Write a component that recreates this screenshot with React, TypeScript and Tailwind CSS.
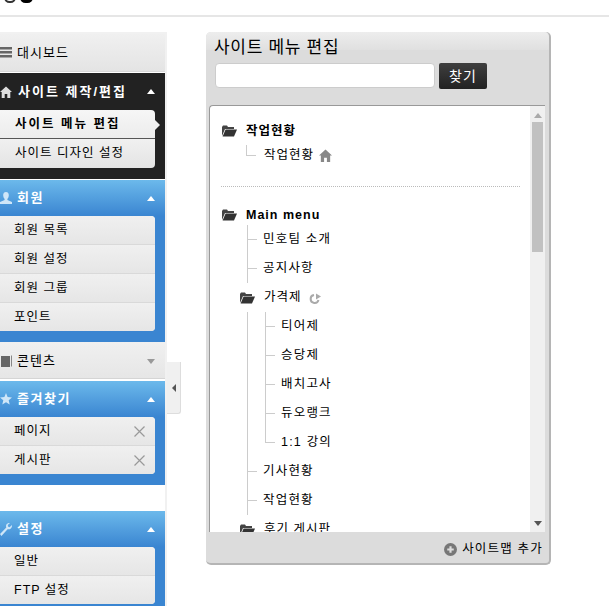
import React from 'react'

const font = "font-['Liberation_Sans','Noto_Sans_CJK_KR',sans-serif]"

function FolderIcon() {
  return (
    <svg width="15" height="12" viewBox="0 0 15 12" className="shrink-0">
      <path d="M0 2 L1 0.5 H5 L6 2 H12 V4 H3 L0 11 Z" fill="#444" />
      <path d="M3.6 4.6 H15 L12 11.5 H0.6 Z" fill="#333" />
    </svg>
  )
}

function HomeIcon({ color, size = 12 }: { color: string; size?: number }) {
  return (
    <svg width={size} height={size} viewBox="0 0 12 12" className="shrink-0">
      <path d="M6 0.5 L12 6 H10.3 V12 H7.3 V8 H4.7 V12 H1.7 V6 H0 Z" fill={color} />
    </svg>
  )
}

function Caret({ up = true, color = '#fff' }: { up?: boolean; color?: string }) {
  return (
    <svg width="8" height="5" viewBox="0 0 8 5" className="shrink-0">
      <path d={up ? 'M4 0 L8 5 H0 Z' : 'M0 0 H8 L4 5 Z'} fill={color} />
    </svg>
  )
}

function CloseX() {
  return (
    <svg width="11" height="11" viewBox="0 0 11 11" className="shrink-0">
      <path d="M0.5 0.5 L10.5 10.5 M10.5 0.5 L0.5 10.5" stroke="#999" strokeWidth="1.2" />
    </svg>
  )
}

interface HeaderProps {
  icon: React.ReactNode
  label: string
  h: string
  tone: string
  labelClass?: string
}

function SectionHeader({ icon, label, h, tone, labelClass = 'ml-[-1px] tracking-[1.5px]' }: HeaderProps) {
  return (
    <div className={`flex items-center pr-[10px] ${h} ${tone}`}>
      <span className="flex w-[18px] shrink-0">{icon}</span>
      <span className={`flex-1 text-[13px] font-bold text-white ${labelClass}`}>{label}</span>
      <Caret />
    </div>
  )
}

function Card({ rows, closable = false }: { rows: string[]; closable?: boolean }) {
  return (
    <div className="mr-[10px] overflow-hidden rounded-r-[4px] bg-[#ebebeb]">
      {rows.map((r, i) => (
        <div
          key={r}
          className={`flex items-center justify-between bg-gradient-to-b from-[#f0f0f0] to-[#e6e6e6] pl-[14px] pr-[10px] text-[12.5px] tracking-[1px] text-black ${
            i > 0 ? 'h-[29px] border-t border-[#d9d9d9]' : 'h-[28px]'
          }`}
        >
          <span>{r}</span>
          {closable && <CloseX />}
        </div>
      ))}
    </div>
  )
}

const blue = 'bg-gradient-to-b from-[#6cb9eb] to-[#3a85d1]'

function Sidebar() {
  return (
    <div className="mt-[15px] w-[167px] shrink-0 border-r-2 border-t-2 border-[#f1f1f1]">
      <div className="flex h-[38px] items-center border-b border-[#d9d9d9] bg-gradient-to-b from-[#f0f0f0] to-[#e4e4e4] text-[13px] tracking-[1px] text-black">
        <svg width="13" height="11" viewBox="0 0 13 11" className="mr-[4px] shrink-0">
          <path d="M0 0 H12 V2.5 H0 Z M0 4 H12 V6.5 H0 Z M0 8 H12 V10.5 H0 Z" fill="#666" />
        </svg>
        대시보드
      </div>

      <div className="mt-px h-[106px] bg-[#222]">
        <SectionHeader
          icon={<HomeIcon color="#ddd" />}
          label="사이트 제작/편집"
          h="h-[37px]"
          tone=""
          labelClass="tracking-[2px]"
        />
        <div className="relative mr-[10px]">
          <div className="flex h-[29px] items-center rounded-tr-[4px] border-b border-[#555] bg-gradient-to-b from-[#f6f6f6] to-[#ececec] pl-[15px] text-[12.5px] font-bold tracking-[2px] text-black">
            사이트 메뉴 편집
          </div>
          <div className="absolute right-[-5px] top-[10px] h-0 w-0 border-y-[5px] border-l-[5px] border-y-transparent border-l-[#f0f0f0]" />
          <div className="flex h-[29px] items-center rounded-br-[4px] bg-gradient-to-b from-[#f0f0f0] to-[#e4e4e4] pl-[15px] text-[12.5px] tracking-[1px] text-black">
            사이트 디자인 설정
          </div>
        </div>
      </div>

      <div className="mt-px h-[162px] bg-[#3a85d1]">
        <SectionHeader
          icon={
            <svg width="12" height="12" viewBox="0 0 12 12">
              <path d="M6 0 C8 0 9 1.6 8.8 3.6 C8.6 5.4 8 6.4 7.4 7 V8 L12 10 V12 H0 V10 L4.6 8 V7 C4 6.4 3.4 5.4 3.2 3.6 C3 1.6 4 0 6 0 Z" fill="#cfe6f8" />
            </svg>
          }
          label="회원"
          h="h-[36px]"
          tone={blue}
        />
        <Card rows={['회원 목록', '회원 설정', '회원 그룹', '포인트']} />
      </div>

      <div className="flex h-[37px] items-center border-b border-[#d5d5d5] bg-gradient-to-b from-[#f0f0f0] to-[#e6e6e6] pr-[10px] pt-[2px] text-[13px] tracking-[1px] text-black">
        <svg width="12" height="12" viewBox="0 0 12 12" className="ml-px mr-[4px] shrink-0">
          <path d="M0 1 H9 V12 H0 Z" fill="#666" />
          <path d="M10.5 0.5 V11.5" stroke="#888" />
        </svg>
        <span className="flex-1">콘텐츠</span>
        <Caret up={false} color="#999" />
      </div>

      <div className="mt-[2px] h-[104px] bg-[#3a85d1]">
        <SectionHeader
          icon={
            <svg width="12" height="12" viewBox="0 0 12 12">
              <path d="M6 0 L7.6 4 L12 4.4 L8.7 7.2 L9.7 11.6 L6 9.2 L2.3 11.6 L3.3 7.2 L0 4.4 L4.4 4 Z" fill="#cfe6f8" />
            </svg>
          }
          label="즐겨찾기"
          h="h-[36px]"
          tone={blue}
        />
        <Card rows={['페이지', '게시판']} closable />
      </div>

      <div className="mt-[26px] h-[100px] bg-[#3a85d1]">
        <SectionHeader
          icon={
            <svg width="12" height="13" viewBox="0 0 12 13">
              <path d="M12 2 L9.5 4.2 L8 3.6 L7.8 2 L10 0 C8 -0.4 6 1 6 3 C6 3.6 6.1 4 6.3 4.4 L0 11 L1.4 13 L7.6 6.2 C10 7 12.4 4.6 12 2 Z" fill="#cfe6f8" />
            </svg>
          }
          label="설정"
          h="h-[36px]"
          tone={blue}
        />
        <Card rows={['일반', 'FTP 설정']} />
      </div>
    </div>
  )
}

function Leaf({ label, last = false }: { label: string; last?: boolean }) {
  return (
    <div className="relative flex h-[29px] items-center pl-[16px] text-[12.5px] tracking-[1.2px] text-black">
      <div className={`absolute left-0 top-0 w-px bg-[#ccc] ${last ? 'h-[15px]' : 'h-full'}`} />
      <div className="absolute left-0 top-[14px] h-px w-[10px] bg-[#ccc]" />
      <span>{label}</span>
    </div>
  )
}

function Tree() {
  return (
    <div className="h-[426px] flex-1 overflow-hidden pl-[12px]">
      <div className="mt-[15px] flex h-[20px] items-center gap-[9px] text-[12.5px] font-bold tracking-[1px] text-black">
        <FolderIcon />
        작업현황
      </div>
      <div className="ml-[24px] mt-[4px] h-[29px]">
        <div className="relative flex h-[20px] items-center pl-[18px] text-[12.5px] tracking-[1px] text-black">
          <div className="absolute left-0 top-0 h-[11px] w-[10px] border-b border-l border-[#ccc]" />
          작업현황
          <span className="ml-[5px]">
            <HomeIcon color="#888" size={13} />
          </span>
        </div>
      </div>
      <div className="ml-[-1px] mr-[10px] mt-[12px] border-t border-dotted border-[#bbb]" />

      <div className="mt-[18px] flex h-[20px] items-center gap-[9px] text-[12.5px] font-bold tracking-[1px] text-black">
        <FolderIcon />
        Main menu
      </div>
      <div className="ml-[25px]">
        <Leaf label="민호팀 소개" />
        <Leaf label="공지사항" />
        <div className="ml-[-7px] flex h-[29px] items-center gap-[9px] text-[12.5px] tracking-[1px] text-black">
          <FolderIcon />
          <span>가격제</span>
          <svg width="12" height="12" viewBox="0 0 12 12" className="ml-[-2px] mt-[2px] shrink-0">
            <path d="M9.5 7 A4 4 0 1 1 5 2" fill="none" stroke="#aaa" strokeWidth="2" />
            <path d="M7 0.5 L12 3.5 L7 6.5 Z" fill="#aaa" />
          </svg>
        </div>
        <div className="relative pl-[18px]">
          <div className="absolute left-0 top-0 h-full w-px bg-[#ccc]" />
          <Leaf label="티어제" />
          <Leaf label="승당제" />
          <Leaf label="배치고사" />
          <Leaf label="듀오랭크" />
          <Leaf label="1:1 강의" last />
        </div>
        <Leaf label="기사현황" />
        <Leaf label="작업현황" />
        <div className="ml-[-7px] flex h-[29px] items-center gap-[9px] text-[12.5px] tracking-[1px] text-black">
          <FolderIcon />
          <span>후기 게시판</span>
        </div>
      </div>
    </div>
  )
}

function Panel() {
  return (
    <div className="ml-[25px] mt-[15px] h-[533px] w-[345px] shrink-0 rounded-[5px] border-b-2 border-r-2 border-[#b5b5b5] bg-[#dcdcdc]">
      <div className="h-[18px] rounded-t-[5px] bg-gradient-to-b from-[#ededed] to-[#e0e0e0] pl-[8px]">
        <h1 className="pt-[2px] text-[17px] leading-[28px] font-normal tracking-[0.7px] text-black">사이트 메뉴 편집</h1>
      </div>
      <div className="flex items-start gap-[4px] pl-[9px] pt-[13px]">
        <input className="h-[25px] w-[220px] rounded-[4px] border border-[#ccc] bg-white" />
        <button className="h-[26px] w-[48px] rounded-[2px] bg-gradient-to-b from-[#3f3f3f] to-[#222] text-[14px] tracking-[1px] text-white">
          찾기
        </button>
      </div>
      <div className="ml-[3px] mt-[16px] flex h-[427px] w-[336px] overflow-hidden rounded-tl-[4px] border-l border-t border-[#999] bg-white">
        <Tree />
        <div className="flex w-[15px] shrink-0 flex-col items-center bg-[#f0f0f0] px-[2px] pt-[7px]">
          <Caret color="#aaa" />
          <div className="mt-[4px] h-[130px] w-full bg-[#c1c1c1]" />
          <div className="mt-[269px]">
            <Caret up={false} color="#555" />
          </div>
        </div>
      </div>
      <div className="flex h-[32px] items-center justify-end gap-[5px] pr-[6px] pt-[2px] text-[12.5px] tracking-[1.2px] text-black">
        <svg width="13" height="13" viewBox="0 0 12 12" className="shrink-0">
          <circle cx="6" cy="6" r="6" fill="#777" />
          <path d="M6 3 V9 M3 6 H9" stroke="#ddd" strokeWidth="2" />
        </svg>
        사이트맵 추가
      </div>
    </div>
  )
}

export default function App() {
  return (
    <div className={`relative h-[606px] w-[609px] overflow-hidden bg-white ${font}`}>
      <div className="flex h-[17px] items-start border-b-2 border-[#e6e6e6] pl-[4px]">
        <div className="mt-[-8px] h-[11px] w-[12px] rounded-full border-2 border-[#333]" />
        <div className="ml-[4px] mt-[-8px] h-[11px] w-[13px] rounded-full bg-black" />
      </div>
      <div className="flex">
        <Sidebar />
        <div className="mt-[345px] flex h-[52px] w-[14px] shrink-0 items-center justify-center rounded-br-[3px] border-b border-r border-[#ddd] bg-[#f0f0f0]">
          <svg width="4" height="8" viewBox="0 0 4 8">
            <path d="M4 0 V8 L0 4 Z" fill="#555" />
          </svg>
        </div>
        <Panel />
      </div>
    </div>
  )
}
